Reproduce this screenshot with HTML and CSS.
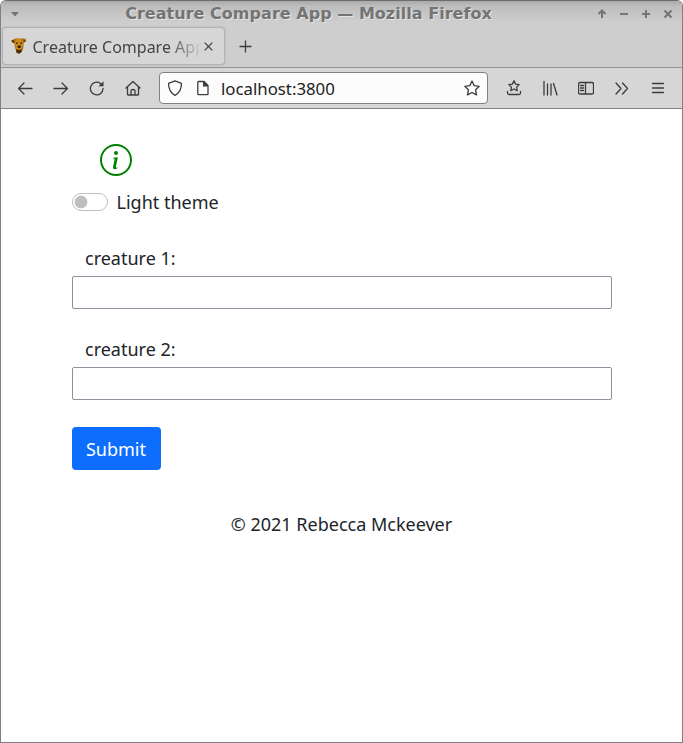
FILE: index.html
```html
<!DOCTYPE html>
<html lang="en">
<head>
<meta charset="utf-8">
<title>Creature Compare App</title>
<link rel="stylesheet" href="styles.css">
</head>
<body>
<div class="window">
  <header class="titlebar">
    <svg class="window-menu" width="10" height="6" viewBox="0 0 10 6"><path d="M1 1h8L5 5.500z"/></svg>
    <div class="window-title">Creature Compare App — Mozilla Firefox</div>
    <div class="window-buttons">
      <svg viewBox="0 0 10 10"><path d="M5 9V2M1.500 5 5 1.500 8.500 5"/></svg>
      <svg viewBox="0 0 10 10"><path d="M1 5h8"/></svg>
      <svg viewBox="0 0 10 10"><path d="M1 5h8M5 1v8"/></svg>
      <svg viewBox="0 0 10 10"><path d="M1.500 1.500l7 7M8.500 1.500l-7 7"/></svg>
    </div>
  </header>
  <nav class="tabs">
    <div class="tab">
      <svg class="favicon" width="16" height="16" viewBox="0 0 16 16">
        <path fill="#a8690f" d="M.3 2.600 4.500.5h6L14.500.8 15.200 3l-2.500 1.600-.5 6L10.500 14l-2.500 1.700L5.500 14.500 4 9.500 3.300 5 1.500 4.500z"/>
        <path fill="#cf8a18" d="M4.500 1.500 7.500.8l3.500.7.8 4-.8 6-3 1.500-3-1.500L4 5z"/>
        <path fill="#5a380a" d="M.3 2.600 2.500 2l1 3-2-.3zM13.300 2l1.900 1-2.500 1.600z"/>
        <path fill="#2a1a08" d="M5 4.500h1.700v1.300H5zM9.300 4.500h1.700v1.300H9.300zM6.600 7.500h3l.3 2-1.500.8-1.800-.8z"/>
        <path fill="#4a2d0a" d="M5 11l1.500.8h3.500l1.200-.8-.7 3L8 15.700 5.500 14.500z"/>
      </svg>
      <span class="tab-label">Creature Compare App</span>
      <svg class="tab-close" width="9" height="9" viewBox="0 0 9 9"><path d="M.7.7l7.600 7.600M8.300.7.7 8.300"/></svg>
    </div>
    <svg class="new-tab" width="13" height="13" viewBox="0 0 13 13"><path d="M6.500.5v12M.5 6.500h12"/></svg>
  </nav>
  <div class="toolbar">
    <div class="tools">
      <span><svg class="icon" viewBox="0 0 16 16"><path d="M15 8.500H1.500M7 3 1.500 8.500 7 14"/></svg></span>
      <span><svg class="icon" viewBox="0 0 16 16"><path d="M1 8.500h13.500M9 3l5.500 5.500L9 14"/></svg></span>
      <span><svg class="icon" viewBox="0 0 16 16"><path d="M14 8.500A6.300 6.300 0 1 1 11.500 3.500L13 5"/><path class="solid" d="M14.500 1.300v5H9.500z"/></svg></span>
      <span><svg class="icon" viewBox="0 0 16 16"><path d="M1 8l7-6.500L15 8M2.500 7v7.300q0 .7.700.7h9.600q.7 0 .7-.7V7M6 15v-4q0-1.500 2-1.500t2 1.500v4"/></svg></span>
    </div>
    <div class="urlbar">
      <svg class="icon" viewBox="0 0 16 16"><path d="M8 .8l6.500 2.500c0 5.500-1.500 9.500-6.500 12C3 12.800 1.500 8.800 1.500 3.300z"/></svg>
      <svg class="icon page-icon" viewBox="0 0 16 16"><path d="M3.500 1.500H9l4 4v8.500q0 .7-.7.7H3.500q-.7 0-.7-.7V2.200q0-.7.7-.7z"/><path class="solid" d="M9 1.500l4 4v1H8v-5z"/></svg>
      <span class="url">localhost:3800</span>
      <svg class="icon star" viewBox="0 0 16 16"><path d="M8 1l2.200 4.600 5 .7-3.600 3.500.9 5.100L8 12.500l-4.500 2.400.9-5.100L.8 6.300l5-.7z"/></svg>
    </div>
    <div class="tools">
      <span><svg class="icon" viewBox="0 0 16 16"><path d="M8 .8l1.600 3.300 3.600.5-2.600 2.500.6 3.600L8 9l-3.200 1.700.6-3.600-2.600-2.500 3.600-.5zM1.500 11.500V13q0 1.500 1.500 1.500h10q1.500 0 1.500-1.500v-1.500"/></svg></span>
      <span><svg class="icon" viewBox="0 0 16 16"><path d="M2 1.500V15M5.500 4v11M9 4v11M11.500 3.500 15 15"/></svg></span>
      <span><svg class="icon" viewBox="0 0 16 16"><path d="M2 2.500h12q1.500 0 1.500 1.500v8.500q0 1.500-1.500 1.500H2Q.5 14 .5 12.500V4Q.5 2.500 2 2.500zM7.500 2.500V14M2.500 5.500h3M2.500 8h3M2.500 10.500h3"/></svg></span>
      <span><svg class="icon" viewBox="0 0 16 16"><path d="M2 3l5 5.500L2 14M8.500 3l5 5.500-5 5.500"/></svg></span>
      <span><svg class="icon" viewBox="0 0 16 16"><path d="M2.500 3.500h11M2.500 8h11M2.500 12.500h11"/></svg></span>
    </div>
  </div>
  <main class="page">
    <svg class="info" width="32" height="32" viewBox="0 0 16 16">
      <path d="M8 15A7 7 0 1 1 8 1a7 7 0 0 1 0 14zm0 1A8 8 0 1 0 8 0a8 8 0 0 0 0 16z"/>
      <path d="m8.930 6.588-2.290.287-.082.380.450.083c.294.070.352.176.288.469l-.738 3.468c-.194.897.105 1.319.808 1.319.545 0 1.178-.252 1.465-.598l.088-.416c-.200.176-.492.246-.686.246-.275 0-.375-.193-.304-.533L8.930 6.588zM9 4.500a1 1 0 1 1-2 0 1 1 0 0 1 2 0z"/>
    </svg>
    <div class="switch-row"><span class="switch"></span><span>Light theme</span></div>
    <form>
      <div class="field"><label for="c1">creature 1:</label><input id="c1" type="text"></div>
      <div class="field"><label for="c2">creature 2:</label><input id="c2" type="text"></div>
      <button type="button" class="submit">Submit</button>
    </form>
    <footer>© 2021 Rebecca Mckeever</footer>
  </main>
</div>
</body>
</html>
```
FILE: styles.css
```css
* { box-sizing: border-box; }
html { background: #fff; }
body { margin: 0; font-family: "Noto Sans", sans-serif; color: #212529; }
svg { display: block; flex: none; fill: none; stroke: #3c3c3c; }
.window {
  height: 743px;
  border: 1px solid #808080;
  border-top-color: #6c6c6c;
  border-radius: 6px 6px 0 0;
  overflow: hidden;
  display: flex;
  flex-direction: column;
  background: #fff;
}
.titlebar {
  height: 25px;
  flex: none;
  display: flex;
  align-items: center;
  padding: 0 9px;
  background: linear-gradient(#aaa, #bdbdbd 20%, #cecece 85%);
}
.window-menu { fill: #747474; stroke: none; }
.window-title {
  flex: 1;
  text-align: center;
  font: bold 16px/24px "DejaVu Sans", sans-serif;
  letter-spacing: .03px;
  color: #747474;
  text-shadow: 1px 1px 0 #e4e4e4;
  white-space: nowrap;
}
.window-buttons { display: flex; gap: 12px; }
.window-buttons svg { width: 10px; height: 10px; stroke: #747474; stroke-width: 2; }
.tabs {
  height: 42px;
  flex: none;
  display: flex;
  align-items: center;
  padding-left: 1px;
  background: #cecece;
  border-bottom: 1px solid #929292;
}
.tab {
  width: 223px;
  height: 38px;
  margin-top: -1px;
  display: flex;
  align-items: center;
  padding-left: 8px;
  border: 1px solid #b2b2ba;
  border-radius: 4px;
  background: #d6d6d6;
  box-shadow: 0 0 2px #aaaab4;
}
.favicon { stroke: none; }
.tab-label {
  width: 168px;
  margin: 2px 3px 0 5.500px;
  font-size: 16px;
  line-height: 24px;
  white-space: nowrap;
  overflow: hidden;
  color: #444;
  mask-image: linear-gradient(to right, #000 136px, transparent 169px);
}
.new-tab { margin-left: 14px; stroke-width: 1.3; }
.tab-close { stroke-width: 1.2; }
.toolbar {
  height: 41px;
  flex: none;
  display: flex;
  align-items: center;
  padding-left: 6px;
  background: #d6d6d6;
  border-bottom: 1px solid #808080;
}
.tools { display: flex; }
.tools span { width: 36px; display: flex; justify-content: center; }
.icon { width: 16px; height: 16px; stroke-width: 1.3; stroke-linejoin: round; stroke-linecap: round; }
.icon .solid { fill: #3c3c3c; stroke: none; }
.urlbar {
  width: 329px;
  height: 32px;
  margin: 0 8px;
  display: flex;
  align-items: center;
  padding: 0 7px;
  border: 1px solid #808080;
  border-radius: 4px;
  background: #fcfcfc;
}
.page-icon { margin-left: 12px; }
.url { flex: 1; margin: 0 0 0 10px; font-size: 16.800px; line-height: 23px; color: #222; }
.page { flex: 1; padding: 35px 70px 0 71px; font-size: 18px; line-height: 27px; }
.info { margin-left: 28px; fill: #008000; stroke: none; }
.switch-row { display: flex; align-items: center; gap: 8.500px; height: 27px; margin-top: 13px; }
.switch {
  width: 36px;
  height: 18px;
  margin-top: -1px;
  border: 1px solid #bfbfbf;
  border-radius: 9px;
  background: radial-gradient(circle at 8px 8px, #bfbfbf 6px, transparent 6.700px);
}
form { margin-top: 29px; }
.field { margin-bottom: 27px; }
.field label { display: block; padding-left: 13px; height: 31px; }
.field input {
  display: block;
  width: 100%;
  height: 33px;
  margin: 0;
  border: 1px solid #8f8f9d;
  border-radius: 2px;
  background: #fff;
}
.submit {
  display: block;
  width: 89px;
  height: 43px;
  padding: 2px 1px 0 0;
  border: 0;
  border-radius: 4px;
  background: #0d6efd;
  color: #fff;
  font: 18px/27px "Noto Sans", sans-serif;
}
footer { margin: 41px 1px 0 0; text-align: center; }
```
